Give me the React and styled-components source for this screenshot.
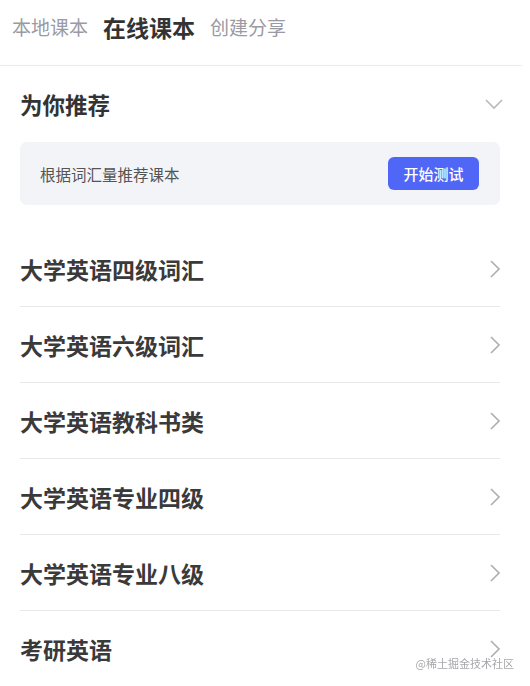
import React from "react";
import styled, { createGlobalStyle } from "styled-components";

const Global = createGlobalStyle`
  html, body { margin: 0; padding: 0; background: #fff; }
  body { font-family: "Noto Sans CJK SC", "Noto Sans", sans-serif; }
`;

const Page = styled.div`
  width: 522px;
  background: #fff;
`;

const TabBar = styled.div`
  display: flex;
  align-items: flex-start;
  gap: 15px;
  padding: 12px 0 0 12px;
  box-sizing: border-box;
  border-bottom: 1px solid #ececef;
  height: 66px;
`;

const Tab = styled.div`
  font-size: ${(p) => (p.$active ? "23px" : "19px")};
  font-weight: ${(p) => (p.$active ? 700 : 400)};
  color: ${(p) => (p.$active ? "#333" : "#9a9aa5")};
  line-height: 30px;
`;

const Section = styled.div`
  padding: 0 22px 0 20px;
`;

const SectionHeader = styled.div`
  height: 76px;
  display: flex;
  align-items: center;
  justify-content: space-between;
`;

const SectionTitle = styled.div`
  font-size: 22.5px;
  font-weight: 700;
  color: #333;
`;

const Card = styled.div`
  height: 63px;
  background: #f3f4f8;
  border-radius: 7px;
  display: flex;
  align-items: center;
  justify-content: space-between;
  padding: 0 21px 0 20px;
  box-sizing: border-box;
`;

const CardText = styled.div`
  font-size: 15.5px;
  color: #555;
`;

const Button = styled.button`
  width: 91px;
  height: 33px;
  border: none;
  border-radius: 6px;
  background: #4f66f6;
  color: #fff;
  font-family: inherit;
  font-size: 15px;
  font-weight: 500;
  padding: 0;
`;

const List = styled.div`
  margin-top: 26px;
`;

const Row = styled.div`
  height: 76px;
  box-sizing: border-box;
  display: flex;
  align-items: center;
  justify-content: space-between;
  border-bottom: 1px solid #e8e8ec;
`;

const RowTitle = styled.div`
  font-size: 23px;
  font-weight: 700;
  color: #3a3a3a;
`;

const Watermark = styled.div`
  position: fixed;
  right: 16px;
  bottom: 15px;
  font-size: 11px;
  color: rgba(150, 150, 155, 0.85);
  font-family: "Noto Sans CJK SC", sans-serif;
`;

const ChevronDown = () => (
  <svg width="20" height="12" viewBox="0 0 20 12" style={{ marginRight: -4 }}>
    <path d="M2 2 L10 10 L18 2" fill="none" stroke="#b8b8bd" strokeWidth="1.6" />
  </svg>
);

const ChevronRight = () => (
  <svg width="12" height="20" viewBox="0 0 12 20" style={{ marginRight: -1 }}>
    <path d="M2 2 L10 10 L2 18" fill="none" stroke="#adadb2" strokeWidth="1.6" />
  </svg>
);

const items = [
  "大学英语四级词汇",
  "大学英语六级词汇",
  "大学英语教科书类",
  "大学英语专业四级",
  "大学英语专业八级",
  "考研英语",
];

export default function App() {
  return (
    <>
      <Global />
      <Page>
        <TabBar>
          <Tab>本地课本</Tab>
          <Tab $active>在线课本</Tab>
          <Tab>创建分享</Tab>
        </TabBar>
        <Section>
          <SectionHeader>
            <SectionTitle>为你推荐</SectionTitle>
            <ChevronDown />
          </SectionHeader>
          <Card>
            <CardText>根据词汇量推荐课本</CardText>
            <Button>开始测试</Button>
          </Card>
          <List>
            {items.map((t) => (
              <Row key={t}>
                <RowTitle>{t}</RowTitle>
                <ChevronRight />
              </Row>
            ))}
          </List>
        </Section>
      </Page>
      <Watermark>@稀土掘金技术社区</Watermark>
    </>
  );
}
